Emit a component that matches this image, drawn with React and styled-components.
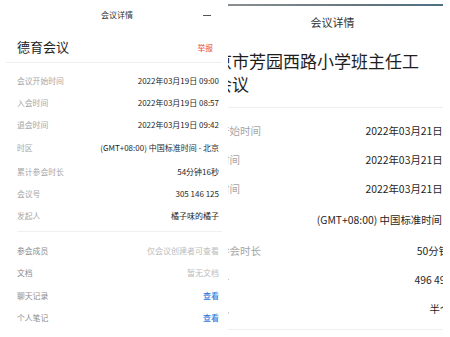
import React from "react";
import styled, { createGlobalStyle, ThemeProvider } from "styled-components";

const GlobalStyle = createGlobalStyle`
  html, body { margin: 0; padding: 0; background: #ffffff; }
  body {
    font-family: "Noto Sans CJK SC", "Noto Sans", "Liberation Sans", sans-serif;
    -webkit-font-smoothing: antialiased;
  }
  * { box-sizing: border-box; }
`;

const leftTheme = {
  cardW: 234, offsetX: 0,
  headerH: 30, headerFont: 8, headerPad: 23, minW: 8,
  titleFont: 13, titleLH: 20, titlePT: 7, titlePB: 5,
  blockML: 6, blockMR: 12, blockPL: 11, blockPR: 9, titleGap: 10,
  reportFont: 7.8,
  secML: 17, secMR: 12, secPR: 3,
  labelFont: 7.8, valueFont: 8,
  rowH: 22, tallH: 25, sec1PT: 6, sec1PB: 5, sec2PT: 7, row2H: 22.5,
};

const rightTheme = {
  cardW: 313, offsetX: -52,
  headerH: 32, headerFont: 11, headerPad: 30, minW: 11,
  titleFont: 17, titleLH: 23, titlePT: 10.5, titlePB: 12.5,
  blockML: 8, blockMR: 16, blockPL: 14, blockPR: 4, titleGap: 19,
  reportFont: 10.5,
  secML: 22, secMR: 14, secPR: 4,
  labelFont: 10.5, valueFont: 10.4,
  rowH: 29, tallH: 33, sec1PT: 7.5, sec1PB: 6, sec2PT: 9, row2H: 29.5,
};

const Stage = styled.div`
  display: flex;
  width: 450px;
  height: 337px;
  overflow: hidden;
  background: #ffffff;
`;

const LeftViewport = styled.div`
  width: 226px;
  height: 337px;
  overflow: hidden;
  flex: none;
`;

const RightViewport = styled.div`
  width: 215px;
  height: 337px;
  margin-left: 2px;
  padding-top: 4px;
  display: flex;
  flex-direction: column;
  flex: none;
`;

const TopRule = styled.div`
  height: 2px;
  flex: none;
  background: linear-gradient(90deg, #8a8f92 0%, #66767e 60%, #4e7085 100%);
`;

const Clip = styled.div`
  flex: 1;
  overflow: hidden;
`;

const Card = styled.div`
  width: ${(p) => p.theme.cardW}px;
  margin-left: ${(p) => p.theme.offsetX}px;
  display: flex;
  flex-direction: column;
  background: #ffffff;
`;

const Header = styled.div`
  height: ${(p) => p.theme.headerH}px;
  display: grid;
  grid-template-columns: 1fr auto 1fr;
  align-items: center;
  padding: 0 ${(p) => p.theme.headerPad}px;
`;

const HeaderTitle = styled.div`
  grid-column: 2;
  font-size: ${(p) => p.theme.headerFont}px;
  color: #333333;
  line-height: 1;
`;

const MinButton = styled.div`
  grid-column: 3;
  justify-self: end;
  width: ${(p) => p.theme.minW}px;
  height: 1px;
  background: #555555;
`;

const TitleBlock = styled.div`
  display: flex;
  align-items: center;
  gap: ${(p) => p.theme.titleGap}px;
  margin: 0 ${(p) => p.theme.blockMR}px 0 ${(p) => p.theme.blockML}px;
  padding: ${(p) => p.theme.titlePT}px ${(p) => p.theme.blockPR}px
    ${(p) => p.theme.titlePB}px ${(p) => p.theme.blockPL}px;
  border-bottom: 1px solid #eeeeee;
`;

const MeetingName = styled.h1`
  flex: 1;
  min-width: 0;
  margin: 0;
  font-size: ${(p) => p.theme.titleFont}px;
  line-height: ${(p) => p.theme.titleLH}px;
  font-weight: 400;
  color: #1e1e1e;
`;

const Report = styled.span`
  flex: none;
  font-size: ${(p) => p.theme.reportFont}px;
  color: #e5484d;
  white-space: nowrap;
`;

const Section = styled.div`
  margin: 0 ${(p) => p.theme.secMR}px 0 ${(p) => p.theme.secML}px;
  padding: ${(p) => (p.$second ? p.theme.sec2PT : p.theme.sec1PT)}px
    ${(p) => p.theme.secPR}px
    ${(p) => (p.$second ? 0 : p.theme.sec1PB)}px 0;
  border-bottom: ${(p) => (p.$second ? "none" : "1px solid #f0f0f0")};
`;

const Row = styled.div`
  display: flex;
  justify-content: space-between;
  align-items: center;
  gap: 8px;
  white-space: nowrap;
  height: ${(p) =>
    p.$second ? p.theme.row2H : p.$tall ? p.theme.tallH : p.theme.rowH}px;
`;

const Label = styled.span`
  font-size: ${(p) => p.theme.labelFont}px;
  color: ${(p) => (p.$second ? "#8c8c8c" : "#a6a6a6")};
  flex: none;
`;

const Value = styled.span`
  font-size: ${(p) => p.theme.valueFont}px;
  color: ${(p) =>
    p.$kind === "muted" ? "#bdbdbd" : p.$kind === "link" ? "#2f7be0" : "#1f1f1f"};
  font-weight: ${(p) => (p.$kind === "link" ? 500 : 400)};
  flex: none;
`;

function DetailCard({ name, rows, rows2 }) {
  return (
    <Card>
      <Header>
        <HeaderTitle>会议详情</HeaderTitle>
        <MinButton />
      </Header>
      <TitleBlock>
        <MeetingName>{name}</MeetingName>
        <Report>举报</Report>
      </TitleBlock>
      <Section>
        {rows.map((r) => (
          <Row key={r[0]} $tall={r[2] === "tall"}>
            <Label>{r[0]}</Label>
            <Value>{r[1]}</Value>
          </Row>
        ))}
      </Section>
      <Section $second>
        {rows2.map((r) => (
          <Row key={r[0]} $second>
            <Label $second>{r[0]}</Label>
            <Value $kind={r[2]}>{r[1]}</Value>
          </Row>
        ))}
      </Section>
    </Card>
  );
}

const secondRows = [
  ["参会成员", "仅会议创建者可查看", "muted"],
  ["文档", "暂无文档", "muted"],
  ["聊天记录", "查看", "link"],
  ["个人笔记", "查看", "link"],
];

const leftRows = [
  ["会议开始时间", "2022年03月19日 09:00"],
  ["入会时间", "2022年03月19日 08:57"],
  ["退会时间", "2022年03月19日 09:42"],
  ["时区", "(GMT+08:00) 中国标准时间 - 北京", "tall"],
  ["累计参会时长", "54分钟16秒"],
  ["会议号", "305 146 125"],
  ["发起人", "橘子味的橘子"],
];

const rightRows = [
  ["会议开始时间", "2022年03月21日 09:00"],
  ["入会时间", "2022年03月21日 08:56"],
  ["退会时间", "2022年03月21日 09:50"],
  ["时区", "(GMT+08:00) 中国标准时间 - 北京", "tall"],
  ["累计参会时长", "50分钟12秒"],
  ["会议号", "496 497 318"],
  ["发起人", "半个橘子"],
];

export default function App() {
  return (
    <>
      <GlobalStyle />
      <Stage>
        <LeftViewport>
          <ThemeProvider theme={leftTheme}>
            <DetailCard name="德育会议" rows={leftRows} rows2={secondRows} />
          </ThemeProvider>
        </LeftViewport>
        <RightViewport>
          <TopRule />
          <Clip>
            <ThemeProvider theme={rightTheme}>
              <DetailCard
                name="北京市芳园西路小学班主任工作会议"
                rows={rightRows}
                rows2={secondRows}
              />
            </ThemeProvider>
          </Clip>
        </RightViewport>
      </Stage>
    </>
  );
}
